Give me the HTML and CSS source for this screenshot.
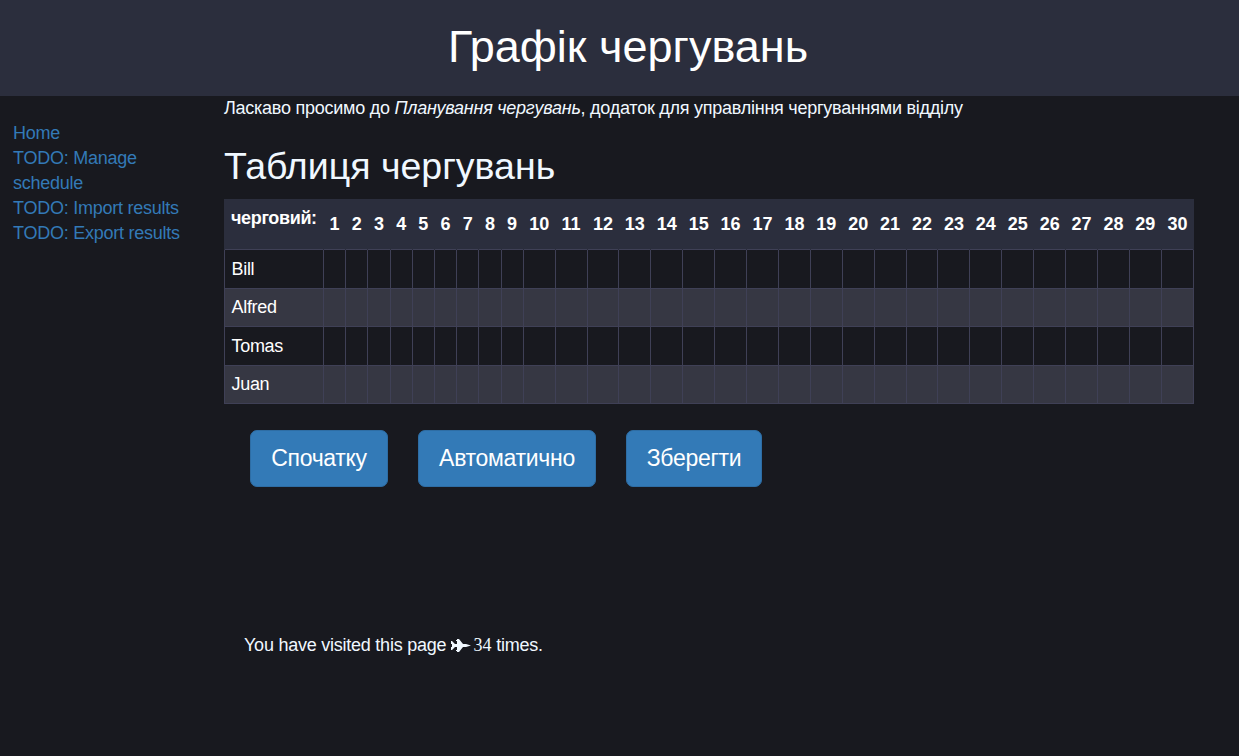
FILE: index.html
```html
<!DOCTYPE html>
<html lang="uk">
<head>
<meta charset="utf-8">
<title>Графік чергувань</title>
<link rel="stylesheet" href="styles.css">
</head>
<body>
<header class="banner"><h1>Графік чергувань</h1></header>
<div class="layout">
<nav class="sidebar">
<a href="#">Home</a>
<a href="#">TODO: Manage schedule</a>
<a href="#">TODO: Import results</a>
<a href="#">TODO: Export results</a>
</nav>
<main class="content">
<p class="intro">Ласкаво просимо до <em>Планування чергувань</em>, додаток для управління чергуваннями відділу</p>
<h2>Таблиця чергувань</h2>
<table class="schedule">
<colgroup id="cols"><col class="name-col"></colgroup>
<thead><tr id="days"><th class="who">черговий:</th></tr></thead>
<tbody id="people"></tbody>
</table>
<div class="actions"><button class="b1">Спочатку</button><button class="b2">Автоматично</button><button class="b3">Зберегти</button></div>
<p class="visits">You have visited this page <svg class="plane" viewBox="0 0 20 13"><path d="M0 2h1l3 3h2V2H5V1h1V0h2l4 5h3l5 1.500L15 8h-3l-4 5H6v-1H5v-1h1V8H4l-3 3H0V8h1V5H0z"/></svg><span class="count">34</span> times.</p>
</main>
</div>
<script src="app.js"></script>
</body>
</html>
```
FILE: styles.css
```css
* { box-sizing: border-box; }
body { margin: 0; background: #18191f; color: aliceblue; font: 18px/25px "Liberation Sans", Arial, sans-serif; }
.banner { height: 96px; padding: 21px 0 0 17px; background: #2b2e3d; color: #fff; text-align: center; }
h1 { margin: 0; font-size: 45px; line-height: 51px; font-weight: 400; }
.layout { display: flex; }
.sidebar { width: 224px; padding: 25px 35px 0 13px; display: flex; flex-direction: column; letter-spacing: -.25px; }
.sidebar a { color: #337ab7; text-decoration: none; }
.content { width: 971px; }
.intro { margin: 0; letter-spacing: -.25px; }
h2 { margin: 25px 0 13px; font-size: 37.5px; line-height: 40px; font-weight: 400; }
.schedule { width: 970px; border-collapse: collapse; table-layout: fixed; color: #fff; }
.schedule thead { background: #2b2e3d; }
.schedule th { height: 50px; padding: 2px 0 0; font-weight: 700; text-align: center; border: solid #2b2e3d; border-width: 0 1px; }
.schedule .who { vertical-align: top; padding: 7px 0 0 6px; text-align: left; letter-spacing: -.35px; }
.name-col { width: 99px; }
.narrow { width: 22.2px; }
.schedule td { height: 38px; padding: 1px 0 0; border: 1px solid #3f4056; letter-spacing: -.3px; }
.schedule tr:nth-child(odd) td { height: 39px; padding-top: 2px; }
.schedule tbody td:first-child { padding-left: 6.5px; }
.schedule tbody tr:nth-child(even) { background: #363743; }
.actions { display: flex; gap: 30px; padding: 26px 0 0 26px; }
.actions button { height: 57px; padding: 0; border: 1px solid #2e6da4; border-radius: 7px; background: #337ab7; color: #fff; font: 23px/30px "Liberation Sans", Arial, sans-serif; letter-spacing: -.3px; }
.b1 { width: 138px; }
.b2 { width: 178px; }
.b3 { width: 136px; }
.visits { margin: 146px 0 0 20px; letter-spacing: -.24px; }
.plane { width: 20px; height: 13px; margin: 0 3px 0 -.5px; fill: aliceblue; vertical-align: -1px; }
.count { font-family: "Liberation Serif", serif; letter-spacing: 0; }
```
FILE: app.js
```javascript
const cols = document.getElementById("cols");
const days = document.getElementById("days");
for (let day = 1; day <= 30; day++) {
  const col = document.createElement("col");
  if (day < 10) col.className = "narrow";
  cols.append(col);
  const th = document.createElement("th");
  th.textContent = day;
  days.append(th);
}
for (const name of ["Bill", "Alfred", "Tomas", "Juan"]) {
  const row = document.getElementById("people").insertRow();
  row.insertCell().textContent = name;
  for (let day = 1; day <= 30; day++) row.insertCell();
}
```
